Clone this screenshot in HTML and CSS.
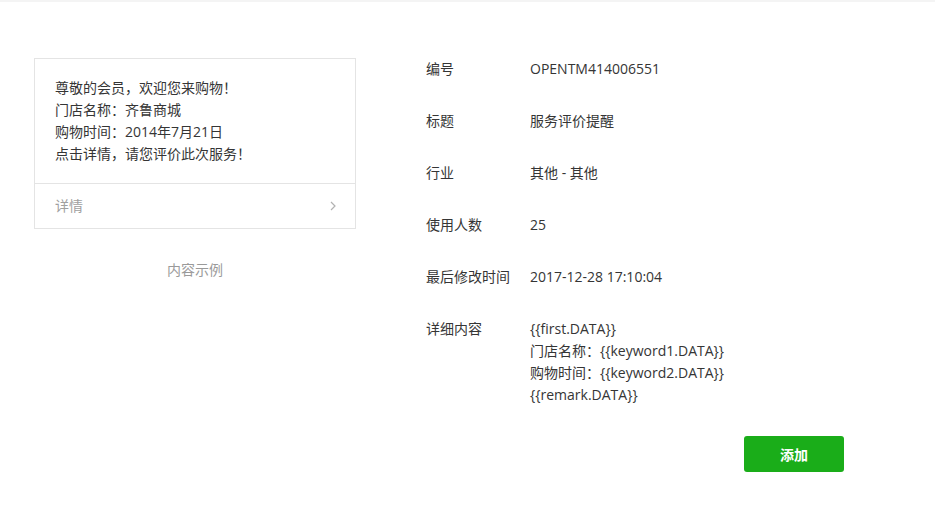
FILE: index.html
```html
<!DOCTYPE html>
<html lang="zh-CN">
<head>
  <meta charset="UTF-8">
  <meta name="viewport" content="width=device-width, initial-scale=1.0">
  <title>模板详情</title>
  <link rel="stylesheet" href="styles.css">
</head>
<body>
  <div class="topbar"></div>

  <div class="main">
    <!-- 左侧：消息示例 -->
    <div class="preview">
      <div class="card">
        <div class="card-body">
          <p>尊敬的会员，欢迎您来购物！</p>
          <p>门店名称：齐鲁商城</p>
          <p>购物时间：2014年7月21日</p>
          <p>点击详情，请您评价此次服务！</p>
        </div>
        <div class="card-foot">
          <span>详情</span>
          <svg class="arrow" width="6" height="10" viewBox="0 0 6 10">
            <path d="M1 1 L5 5 L1 9" fill="none" stroke="#b2b2b2" stroke-width="1.2"/>
          </svg>
        </div>
      </div>
      <p class="caption">内容示例</p>
    </div>

    <!-- 右侧：模板信息 -->
    <div class="info">
      <div class="row">
        <div class="label">编号</div>
        <div class="value">OPENTM414006551</div>
      </div>
      <div class="row">
        <div class="label">标题</div>
        <div class="value">服务评价提醒</div>
      </div>
      <div class="row">
        <div class="label">行业</div>
        <div class="value">其他 - 其他</div>
      </div>
      <div class="row">
        <div class="label">使用人数</div>
        <div class="value">25</div>
      </div>
      <div class="row">
        <div class="label">最后修改时间</div>
        <div class="value">2017-12-28 17:10:04</div>
      </div>
      <div class="row">
        <div class="label">详细内容</div>
        <div class="value">
          {{first.DATA}}<br>
          门店名称：{{keyword1.DATA}}<br>
          购物时间：{{keyword2.DATA}}<br>
          {{remark.DATA}}
        </div>
      </div>
      <div class="actions">
        <button class="btn">添加</button>
      </div>
    </div>
  </div>
</body>
</html>
```

FILE: styles.css
```css
/* 기본 */
body {
  margin: 0;
  font-family: "Open Sans", "Noto Sans CJK SC", sans-serif;
  font-size: 14px;
  line-height: 22px;
  color: #353535;
  background: #fff;
}

p {
  margin: 0;
}

.topbar {
  height: 2px;
  background-color: #f4f4f4;
}

.main {
  display: flex;
  gap: 70px;
  padding: 56px 0 0 34px;
}

/* 左侧预览 */
.preview {
  width: 322px;
}

.card {
  border: 1px solid #e4e4e4;
}

.card-body {
  padding: 18px 20px;
}

.card-foot {
  display: flex;
  justify-content: space-between;
  align-items: center;
  height: 44px;
  padding: 0 20px;
  border-top: 1px solid #e4e4e4;
  color: #a0a0a0;
}

.arrow {
  margin-right: -1px;
}

.caption {
  margin-top: 30px;
  text-align: center;
  color: #9a9a9a;
}

/* 右侧信息 */
.info {
  width: 418px;
}

.row {
  display: flex;
  margin-bottom: 30px;
}

.label {
  width: 104px;
  flex-shrink: 0;
}

.actions {
  display: flex;
  justify-content: flex-end;
  margin-top: 30px;
}

.btn {
  width: 100px;
  height: 36px;
  border: 0;
  border-radius: 3px;
  background-color: #1aad19;
  color: #fff;
  font-family: "Open Sans", "Noto Sans CJK SC", sans-serif;
  font-size: 14px;
  font-weight: bold;
  cursor: pointer;
}
```
